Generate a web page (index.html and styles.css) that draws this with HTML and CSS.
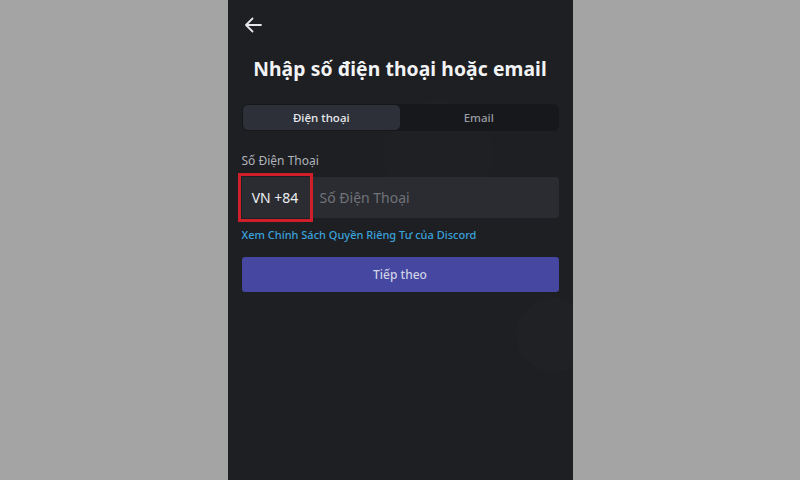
FILE: index.html
```html
<!DOCTYPE html>
<html lang="vi">
<head>
<meta charset="utf-8">
<title>Nhập số điện thoại hoặc email</title>
<link rel="stylesheet" href="styles.css">
</head>
<body>
<div class="screen">
  <div class="deco deco-a"></div>
  <div class="deco deco-b"></div>
  <div class="topbar">
    <svg class="back" width="18" height="16" viewBox="0 0 18 16" aria-hidden="true">
      <path d="M17 8H2M8.5 1.5L2 8l6.5 6.5" fill="none" stroke="#e6e6e8" stroke-width="1.8" stroke-linecap="round" stroke-linejoin="round"/>
    </svg>
  </div>
  <h1 class="title">Nhập số điện thoại hoặc email</h1>
  <div class="tabs">
    <div class="tab active">Điện thoại</div>
    <div class="tab">Email</div>
  </div>
  <div class="label">Số Điện Thoại</div>
  <div class="field">
    <div class="cc">VN +84</div>
    <div class="placeholder">Số Điện Thoại</div>
  </div>
  <div class="link">Xem Chính Sách Quyền Riêng Tư của Discord</div>
  <div class="btn">Tiếp theo</div>
</div>
</body>
</html>
```
FILE: styles.css
```css
html, body {
  margin: 0;
  padding: 0;
}
body {
  background: #a4a4a4;
  font-family: "Noto Sans", "Open Sans", sans-serif;
  height: 480px;
  overflow: hidden;
}
.screen {
  position: relative;
  width: 345px;
  height: 480px;
  margin: 0 auto;
  background: #1e1f23;
  box-sizing: border-box;
  padding: 0 14px;
  overflow: hidden;
  display: flex;
  flex-direction: column;
}
.deco {
  position: absolute;
  border-radius: 50%;
  background: #202125;
  z-index: 0;
}
.deco-a {
  width: 74px;
  height: 74px;
  left: 288px;
  top: 298px;
}
.deco-b {
  width: 110px;
  height: 110px;
  left: 155px;
  top: 100px;
  background: #1f2024;
}
.topbar, .title, .tabs, .label, .field, .link, .btn {
  position: relative;
  z-index: 1;
}
.topbar {
  height: 50px;
  display: flex;
  align-items: center;
  padding-left: 2px;
}
.back {
  display: block;
}
.title {
  margin: 5px 0 0;
  font-size: 19.3px;
  line-height: 28px;
  font-weight: 700;
  color: #f2f3f5;
  text-align: center;
  letter-spacing: 0.1px;
}
.tabs {
  margin-top: 21px;
  height: 27px;
  background: #17181b;
  border-radius: 6px;
  padding: 1px;
  display: flex;
  box-sizing: border-box;
}
.tab {
  flex: 1;
  display: flex;
  align-items: center;
  justify-content: center;
  font-size: 11.5px;
  font-weight: 500;
  color: #9a9ca4;
  border-radius: 5px;
}
.tab.active {
  background: #2e3039;
  color: #e9eaee;
}
.label {
  margin-top: 22px;
  font-size: 12px;
  line-height: 16px;
  color: #b0b3ba;
}
.field {
  margin-top: 8px;
  height: 41px;
  background: #2b2c31;
  border-radius: 4px;
  display: flex;
  align-items: center;
}
.cc {
  width: 67px;
  height: 100%;
  display: flex;
  align-items: center;
  justify-content: center;
  font-size: 14px;
  color: #eceef1;
  background: #2b2c31;
  outline: 3px solid #cf1f2a;
  outline-offset: 1px;
}
.placeholder {
  padding-left: 11px;
  font-size: 14px;
  color: #707379;
}
.link {
  margin-top: 9px;
  font-size: 11px;
  line-height: 16px;
  font-weight: 500;
  color: #3aa2dc;
}
.btn {
  margin-top: 14px;
  height: 35px;
  border-radius: 3px;
  background: #4547a0;
  display: flex;
  align-items: center;
  justify-content: center;
  font-size: 12px;
  font-weight: 500;
  color: #d0d2e6;
}
```
